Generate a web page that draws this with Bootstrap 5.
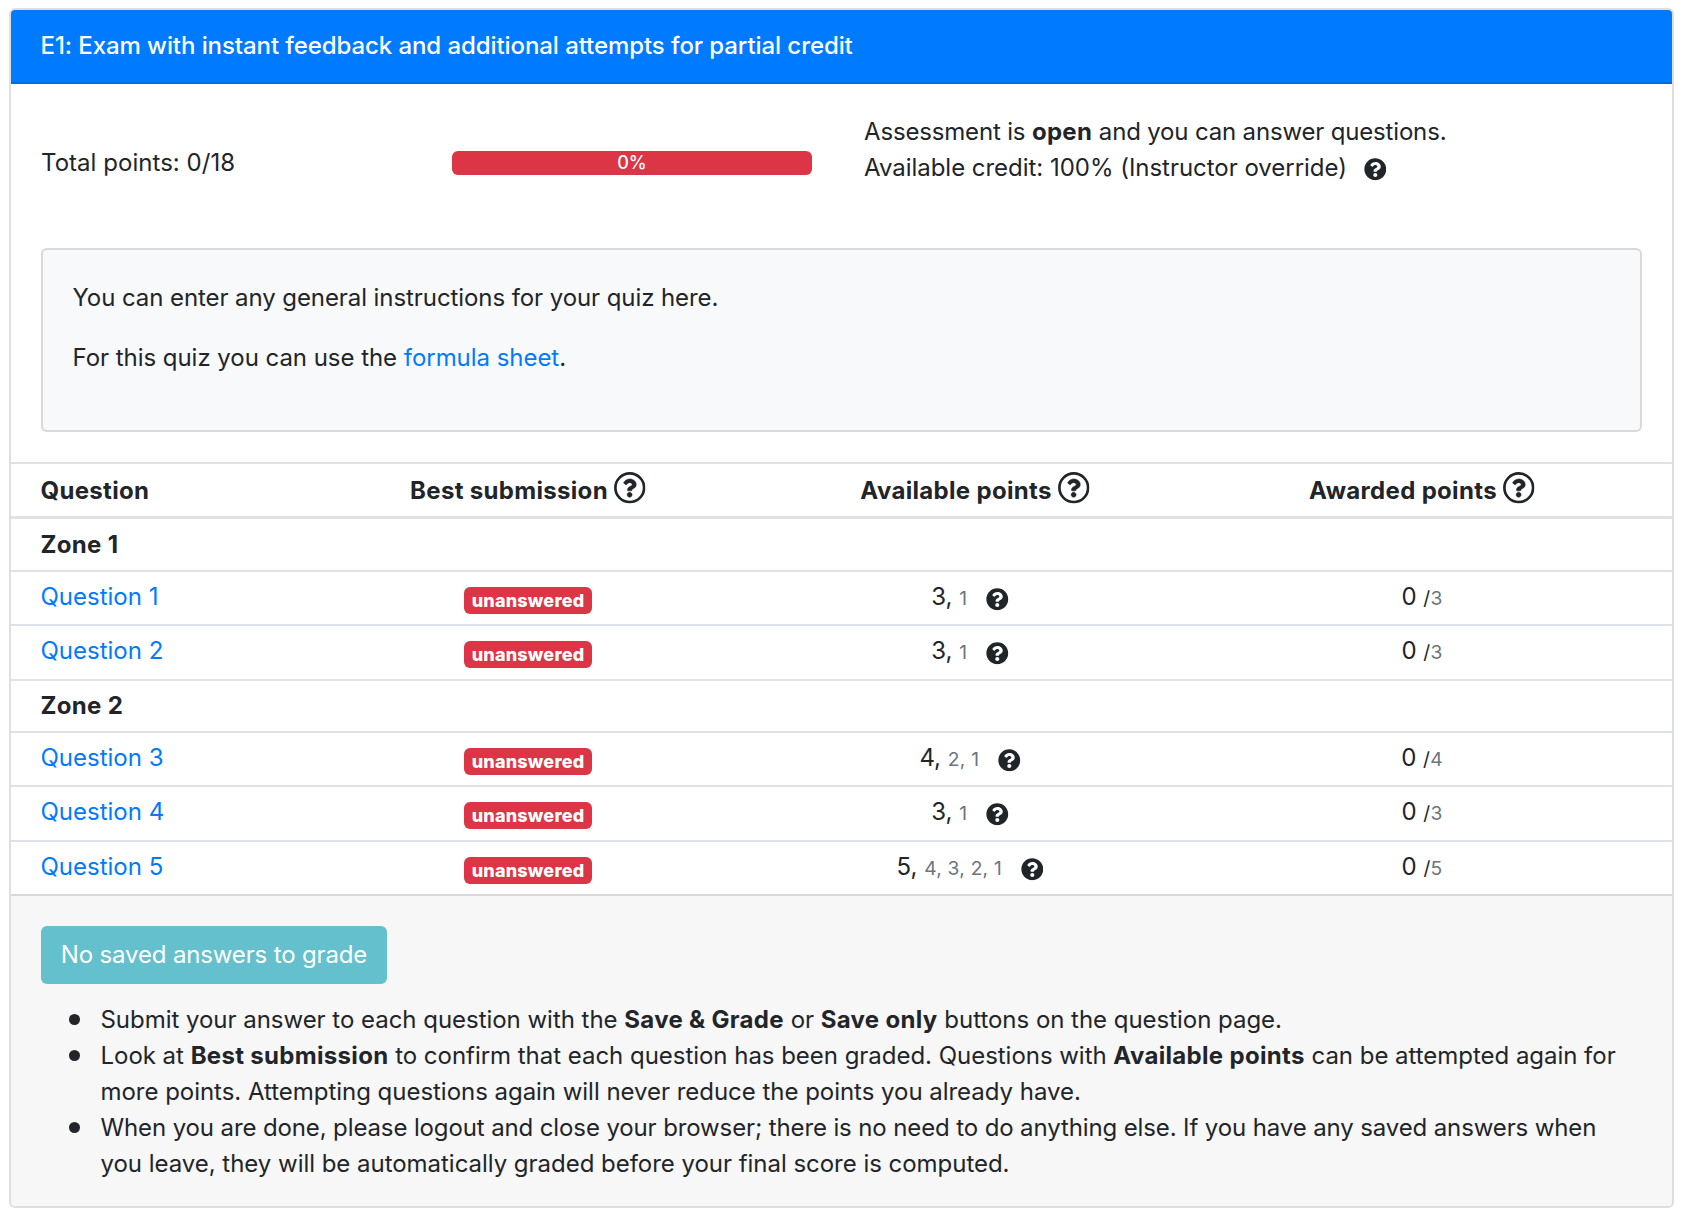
<!DOCTYPE html>
<html lang="en">
<head>
<meta charset="utf-8">
<meta name="viewport" content="width=device-width, initial-scale=1">
<title>E1: Exam</title>
<link href="https://cdn.jsdelivr.net/npm/bootstrap@5.3.0/dist/css/bootstrap.min.css" rel="stylesheet">
<style>
  html { font-size: 24px; }
  body { font-family: Inter, "Liberation Sans", sans-serif; color: #212529; padding: 8px 10px 10px 9px; background: #fff; }
  a { color: #007bff; text-decoration: none; }
  strong, th { font-weight: 700; letter-spacing: .32px; }
  .exam { border: 2px solid rgba(0,0,0,.125); border-radius: 6px; }
  .exam > .card-header { background: #007bff; border-bottom: 2px solid rgba(0,0,0,.125); border-radius: 4px 4px 0 0; padding: 18px 30px 18px 29.5px; font-weight: 500; letter-spacing: -.08px; }
  .exam > .card-body { padding: 30px; }
  .summary { height: 98px; }
  .total-col { width: 411px; letter-spacing: .04px; }
  .bar-col { width: 412px; }
  .status-text { letter-spacing: -.17px; }
  .credit-text { letter-spacing: -.03px; }
  .exam .progress { width: 360px; height: 24px; font-size: 18px; border-radius: 6px; }
  .exam .progress-bar { background-color: #dc3545; font-weight: 500; padding-bottom: 1px; }
  .instructions { background: #f8f9fa; border: 2px solid rgba(0,0,0,.125); border-radius: 6px; margin-top: 36px; padding: 30px 30px 30px 29.5px; letter-spacing: -.08px; }
  .instructions p { margin-bottom: 24px; }
  .instructions p:last-child { letter-spacing: -.04px; }
  .scores { table-layout: fixed; width: 100%; border-collapse: separate; border-spacing: 0; }
  .scores th, .scores td { border-top: 2px solid #dee2e6; padding: 7px 7px 0; vertical-align: top; line-height: 36px; height: 54px; white-space: nowrap; }
  .scores th:first-child, .scores td:first-child { padding-left: 29.5px; }
  .scores thead th { padding-top: 9px; }
  .scores tr.zone-first th { border-top-width: 3px; padding-top: 8px; }
  .scores tr.zone-next th { height: 52px; padding-top: 7px; }
  .scores tr.tall td { height: 55px; }
  .scores td.avail { padding-left: 9px; }
  .tag { display: inline-block; width: 128px; height: 27px; line-height: 27px; border-radius: 6px; background: #dc3545; color: #fff; font-size: 18px; font-weight: 800; letter-spacing: .2px; margin-top: 8px; vertical-align: top; }
  .later { font-size: 19.2px; letter-spacing: .25px; }
  .later.text-muted, .later .text-muted { color: #6c757d !important; }
  .q-solid { width: 22.6px; height: 22.6px; fill: currentColor; vertical-align: -5.5px; }
  .credit-text .q-solid { margin-left: 10px; vertical-align: -4.5px; }
  .q-ring { width: 31.5px; height: 31.5px; fill: currentColor; vertical-align: top; margin: -1px 0 0 .5px; }
  .ring-line { fill: none; stroke: currentColor; stroke-width: 50; }
  .ring-mark { stroke: currentColor; stroke-width: 10; }
  .exam > .card-footer { background: #f7f7f7; border-top: 2px solid #d8d8d8; border-radius: 0 0 4px 4px; padding: 30px 30px 24px; }
  .grade { width: 346px; height: 58px; border-radius: 6px; font-size: 24px; line-height: 58px; padding: 0; border: 0; display: block; letter-spacing: -.15px; }
  .grade:disabled { background: #65c0ce; color: #fff; opacity: 1; }
  .notes { padding-left: 59.5px; margin: 18px 0 0; list-style: none; letter-spacing: -.03px; }
  .notes .snug { letter-spacing: -.12px; }
  .notes li::before { content: ""; display: inline-block; width: 11px; height: 11px; border-radius: 50%; background: currentColor; margin: 0 21px 0 -32px; vertical-align: 3px; letter-spacing: 0; }
</style>
</head>
<body>
<svg class="d-none" xmlns="http://www.w3.org/2000/svg">
  <symbol id="solid" viewBox="0 0 512 512"><path d="M504 256c0 136.997-111.043 248-248 248S8 392.997 8 256C8 119.083 119.043 8 256 8s248 111.083 248 248zM262.655 90c-54.497 0-89.255 22.957-116.549 63.758-3.536 5.286-2.353 12.415 2.715 16.258l34.699 26.31c5.205 3.947 12.621 3.008 16.665-2.122 17.864-22.658 30.113-35.797 57.303-35.797 20.429 0 45.698 13.148 45.698 32.958 0 14.976-12.363 22.667-32.534 33.976C247.128 238.528 216 254.941 216 296v4c0 6.627 5.373 12 12 12h56c6.627 0 12-5.373 12-12v-1.333c0-28.462 83.186-29.647 83.186-106.667 0-58.002-60.165-102-116.531-102zM256 338c-25.365 0-46 20.635-46 46 0 25.364 20.635 46 46 46s46-20.636 46-46c0-25.364-20.635-46-46-46z"/></symbol>
  <symbol id="ring" viewBox="-36 -40 588 588"><circle class="ring-line" cx="258" cy="254" r="268"/><path class="ring-mark" d="M262.655 90c-54.497 0-89.255 22.957-116.549 63.758-3.536 5.286-2.353 12.415 2.715 16.258l34.699 26.31c5.205 3.947 12.621 3.008 16.665-2.122 17.864-22.658 30.113-35.797 57.303-35.797 20.429 0 45.698 13.148 45.698 32.958 0 14.976-12.363 22.667-32.534 33.976C247.128 238.528 216 254.941 216 296v4c0 6.627 5.373 12 12 12h56c6.627 0 12-5.373 12-12v-1.333c0-28.462 83.186-29.647 83.186-106.667 0-58.002-60.165-102-116.531-102zM256 338c-25.365 0-46 20.635-46 46 0 25.364 20.635 46 46 46s46-20.636 46-46c0-25.364-20.635-46-46-46z"/></symbol>
</svg>
<div class="card exam">
  <div class="card-header text-white">E1: Exam with instant feedback and additional attempts for partial credit</div>
  <div class="card-body">
    <div class="summary d-flex align-items-center">
      <div class="total-col">Total points: 0/18</div>
      <div class="bar-col"><div class="progress"><div class="progress-bar w-100">0%</div></div></div>
      <div class="align-self-start">
        <div class="status-text">Assessment is <strong>open</strong> and you can answer questions.</div>
        <div class="credit-text">Available credit: 100% (Instructor override) <svg class="q-solid"><use href="#solid"/></svg></div>
      </div>
    </div>
    <div class="instructions">
      <p>You can enter any general instructions for your quiz here.</p>
      <p>For this quiz you can use the <a href="#">formula sheet</a>.</p>
    </div>
  </div>
  <table class="scores">
    <colgroup><col style="width:267px"><col style="width:500px"><col style="width:394px"><col style="width:500px"></colgroup>
    <thead>
      <tr><th>Question</th><th class="text-center">Best submission <svg class="q-ring"><use href="#ring"/></svg></th><th class="text-center">Available points <svg class="q-ring"><use href="#ring"/></svg></th><th class="text-center">Awarded points <svg class="q-ring"><use href="#ring"/></svg></th></tr>
    </thead>
    <tbody>
      <tr class="zone-first"><th colspan="4">Zone 1</th></tr>
      <tr><td><a href="#">Question 1</a></td><td class="text-center"><span class="tag">unanswered</span></td><td class="text-center avail">3, <span class="later text-muted">1</span> <svg class="q-solid mx-2"><use href="#solid"/></svg></td><td class="text-center">0 <span class="later">/<span class="text-muted">3</span></span></td></tr>
      <tr class="tall"><td><a href="#">Question 2</a></td><td class="text-center"><span class="tag">unanswered</span></td><td class="text-center avail">3, <span class="later text-muted">1</span> <svg class="q-solid mx-2"><use href="#solid"/></svg></td><td class="text-center">0 <span class="later">/<span class="text-muted">3</span></span></td></tr>
      <tr class="zone-next"><th colspan="4">Zone 2</th></tr>
      <tr><td><a href="#">Question 3</a></td><td class="text-center"><span class="tag">unanswered</span></td><td class="text-center avail">4, <span class="later text-muted">2, 1</span> <svg class="q-solid mx-2"><use href="#solid"/></svg></td><td class="text-center">0 <span class="later">/<span class="text-muted">4</span></span></td></tr>
      <tr class="tall"><td><a href="#">Question 4</a></td><td class="text-center"><span class="tag">unanswered</span></td><td class="text-center avail">3, <span class="later text-muted">1</span> <svg class="q-solid mx-2"><use href="#solid"/></svg></td><td class="text-center">0 <span class="later">/<span class="text-muted">3</span></span></td></tr>
      <tr><td><a href="#">Question 5</a></td><td class="text-center"><span class="tag">unanswered</span></td><td class="text-center avail">5, <span class="later text-muted">4, 3, 2, 1</span> <svg class="q-solid mx-2"><use href="#solid"/></svg></td><td class="text-center">0 <span class="later">/<span class="text-muted">5</span></span></td></tr>
    </tbody>
  </table>
  <div class="card-footer">
    <button class="btn grade" type="button" disabled>No saved answers to grade</button>
    <ul class="notes">
      <li>Submit your answer to each question with the <strong>Save &amp; Grade</strong> or <strong>Save only</strong> buttons on the question page.</li>
      <li>Look at <strong>Best submission</strong> to confirm that each question has been graded. Questions with <strong>Available points</strong> can be attempted again for<br>more points. Attempting questions again will never reduce the points you already have.</li>
      <li><span class="snug">When you are done, please logout and close your browser; there is no need to do anything else. If you have any saved answers when</span><br>you leave, they will be automatically graded before your final score is computed.</li>
    </ul>
  </div>
</div>
<script src="https://cdn.jsdelivr.net/npm/bootstrap@5.3.0/dist/js/bootstrap.bundle.min.js"></script>
</body>
</html>
